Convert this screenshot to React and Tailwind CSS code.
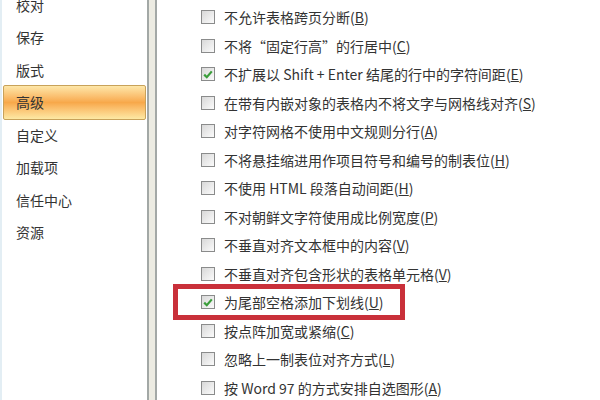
import React from "react";

const navItems = ["校对", "保存", "版式", "高级", "自定义", "加载项", "信任中心", "资源"];

const options = [
  { label: "不允许表格跨页分断", key: "B" },
  { label: "不将“固定行高”的行居中", key: "C" },
  { label: "不扩展以 Shift + Enter 结尾的行中的字符间距", key: "E", checked: true },
  { label: "在带有内嵌对象的表格内不将文字与网格线对齐", key: "S" },
  { label: "对字符网格不使用中文规则分行", key: "A" },
  { label: "不将悬挂缩进用作项目符号和编号的制表位", key: "H" },
  { label: "不使用 HTML 段落自动间距", key: "H" },
  { label: "不对朝鲜文字符使用成比例宽度", key: "P" },
  { label: "不垂直对齐文本框中的内容", key: "V" },
  { label: "不垂直对齐包含形状的表格单元格", key: "V" },
  { label: "为尾部空格添加下划线", key: "U", checked: true, marked: true },
  { label: "按点阵加宽或紧缩", key: "C" },
  { label: "忽略上一制表位对齐方式", key: "L" },
  { label: "按 Word 97 的方式安排自选图形", key: "A" },
];

function Checkbox({ checked }) {
  return (
    <div className="w-[14px] h-[14px] border border-[#8a8b8b] bg-gradient-to-br from-[#d8d8d8] to-[#fbfbfb] flex items-center justify-center shrink-0">
      {checked && (
        <svg width="10" height="9" viewBox="0 0 10 9">
          <path d="M1.2 4.6 L3.8 7.2 L8.8 1.4" fill="none" stroke="#3a9d3a" strokeWidth="2.2" />
        </svg>
      )}
    </div>
  );
}

export default function App() {
  return (
    <div
      className="w-[600px] h-[400px] flex bg-white text-[#333] overflow-hidden"
      style={{ fontFamily: '"Noto Sans CJK SC", "Noto Sans", sans-serif' }}
    >
      {/* left nav */}
      <div className="w-[147px] h-full border-l-2 border-[#e3eef4]">
        <div className="flex flex-col -mt-[11px]">
          {navItems.map((item) =>
            item === "高级" ? (
              <div
                key={item}
                className="h-[35px] -my-[1.25px] mx-[1px] flex items-center pl-[12px] text-[14px] rounded-[2px] border border-[#c8a25a] bg-gradient-to-b from-[#fde7a8] via-[#f7a84a] to-[#fde9a4]"
              >
                {item}
              </div>
            ) : (
              <div key={item} className="h-[32.5px] flex items-center pl-[14px] text-[14px]">
                {item}
              </div>
            )
          )}
        </div>
      </div>

      {/* splitter */}
      <div className="w-[10px] h-full border-x-2 border-[#a3a8a6] bg-[#ecebe2]" />

      {/* options */}
      <div className="flex-1 h-full pt-[3px] pl-[44px]">
        {options.map((o, i) => (
          <div key={i} className="h-[28.5px] flex items-center">
            <div
              className={
                o.marked
                  ? "-ml-[28px] pl-[23px] pr-[16px] h-[36px] border-[5px] border-[#c9303a] flex items-center gap-[9px]"
                  : "flex items-center gap-[9px]"
              }
            >
              <Checkbox checked={o.checked} />
              <span className="text-[14px] whitespace-nowrap leading-none">
                {o.label}(<span className="underline">{o.key}</span>)
              </span>
            </div>
          </div>
        ))}
      </div>
    </div>
  );
}
